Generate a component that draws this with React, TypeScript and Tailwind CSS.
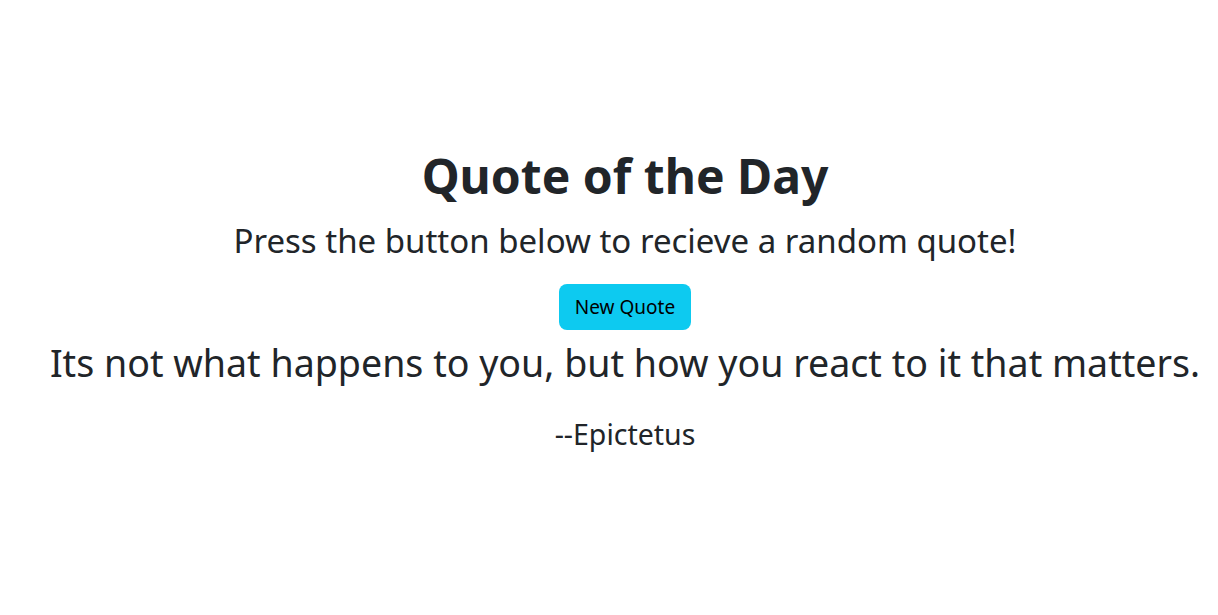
export default function App() {
  return (
    <div
      className="min-h-[615px] w-full bg-white pl-8 text-[#212529]"
      style={{ fontFamily: '"Noto Sans", "Open Sans", sans-serif' }}
    >
      <div className="flex flex-col items-center pt-[147px] text-center">
        <h1 className="text-[48px] font-bold leading-[58px]">Quote of the Day</h1>
        <p className="mt-4 text-[33px] leading-[40px]">
          Press the button below to recieve a random quote!
        </p>
        <button className="mt-[23px] rounded-lg bg-[#0dcaf0] px-4 py-2 text-[19px] leading-[30px] text-black">
          New Quote
        </button>
        <p className="mt-[10px] text-[37.6px] leading-[45px]">
          Its not what happens to you, but how you react to it that matters.
        </p>
        <p className="mt-8 text-[28.5px] leading-[34px]">--Epictetus</p>
      </div>
    </div>
  );
}
